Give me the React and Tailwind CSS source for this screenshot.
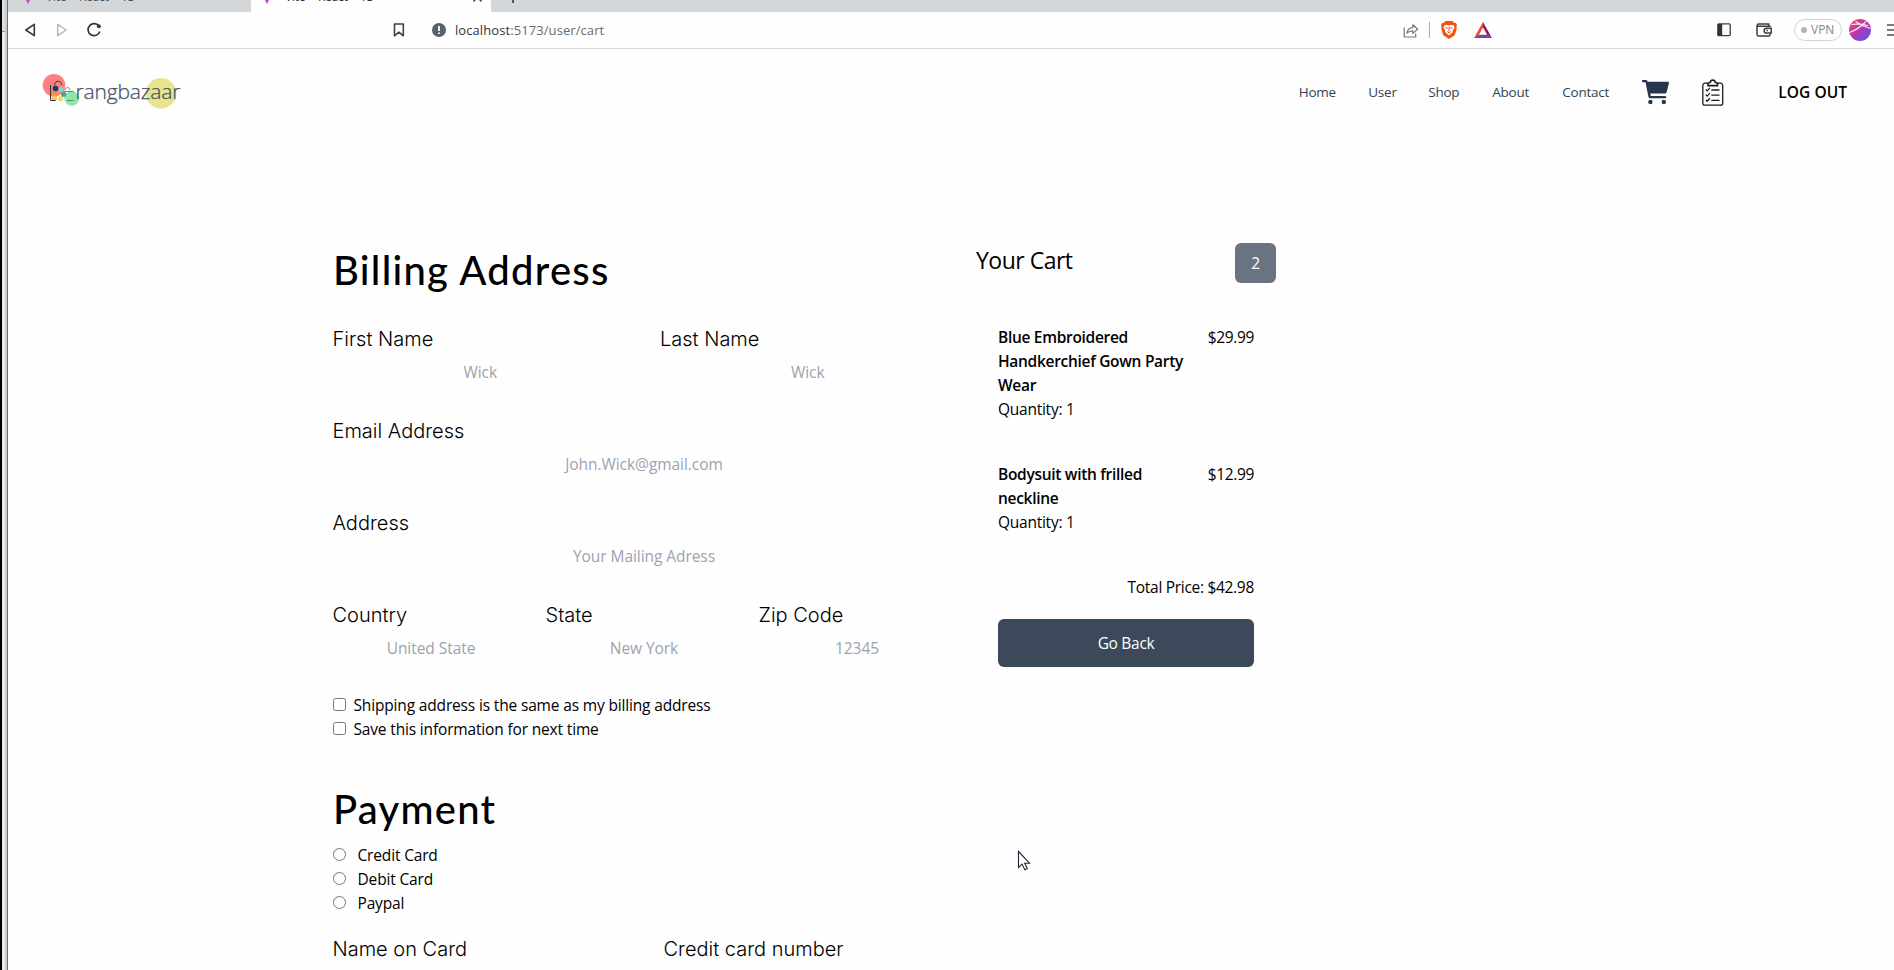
const TabLogo = () => (
  <svg className="h-3 w-3 shrink-0" viewBox="0 0 12 12">
    <path d="M0 0H12L6 12Z" fill="#b33df5" />
    <path d="M5 4h2.4L6.2 9.4Z" fill="#f5a623" />
  </svg>
);

function TabStrip() {
  return (
    <div className="flex h-3 w-full shrink-0 overflow-hidden bg-[#d3d7da] text-[12px] leading-3 tracking-[-0.2px]">
      <div className="-mt-2 flex h-5 w-[243px] shrink-0 pl-[14px]">
        <TabLogo />
        <span className="-mt-px ml-3 w-[91px] whitespace-nowrap text-[#4b4f54]">Vite + React + TS</span>
      </div>
      <div className="-mt-2 flex h-5 w-[240px] shrink-0 bg-[#fefefe] pl-[10px]">
        <TabLogo />
        <span className="-mt-px ml-3 whitespace-nowrap text-[#2b2e33]">Vite + React + TS</span>
        <svg className="mr-[9px] ml-auto h-[10px] w-[9px]" viewBox="0 0 9 10" stroke="#33373c" strokeWidth="1.4">
          <path d="M0.5 1 8.5 9.5M8.5 1 .5 9.5" />
        </svg>
      </div>
      <svg className="-mt-2 ml-4 h-3 w-3" viewBox="0 0 12 12" stroke="#33373c" strokeWidth="1.6">
        <path d="M6 0v11M.5 5.500h11" />
      </svg>
    </div>
  );
}

function AddressBar() {
  return (
    <div className="flex h-[37px] w-full shrink-0 items-center overflow-hidden border-b border-[#d0d5d9] bg-[#fefefe]">
      <svg className="ml-[16px] h-4 w-3 shrink-0" viewBox="0 0 12 16" fill="none" stroke="#34383d" strokeWidth="1.6" strokeLinejoin="round">
        <path d="M10.300 2.300v11.400L1.800 8Z" />
      </svg>
      <svg className="ml-[20px] h-4 w-3 shrink-0" viewBox="0 0 12 16" fill="none" stroke="#b3b6b9" strokeWidth="1.500" strokeLinejoin="round">
        <path d="M1.700 2.300v11.400L10.200 8Z" />
      </svg>
      <svg className="ml-[18px] h-4 w-4 shrink-0" viewBox="0 0 16 16" fill="none" stroke="#34383d" strokeWidth="1.700">
        <path d="M13 4.200A6 6 0 1 0 13.800 9.500" />
        <circle cx="12.800" cy="4.200" r="2" fill="#34383d" stroke="none" />
      </svg>
      <svg className="ml-[291px] h-4 w-3 shrink-0" viewBox="0 0 12 16" fill="none" stroke="#3f4347" strokeWidth="1.600">
        <path d="M1.500 2h8.800v11.800L5.900 10.200 1.500 13.800Z" strokeLinejoin="round" />
      </svg>
      <svg className="ml-[27px] h-[14px] w-[14px] shrink-0" viewBox="0 0 14 14">
        <circle cx="7" cy="7" r="7" fill="#59616b" />
        <path d="M7 3v5M7 9.400v1.700" stroke="#fff" strokeWidth="1.800" />
      </svg>
      <div className="ml-[9px] w-[160px] shrink-0 text-[13px] tracking-[0.08px] whitespace-nowrap text-[#676c72]">
        <span className="text-[#33373c]">localhost</span>:5173/user/cart
      </div>
      <svg className="ml-[788px] h-[15px] w-4 shrink-0" viewBox="0 0 16 15" fill="none" stroke="#72767a" strokeWidth="1.200">
        <path d="M1.200 4.500v9.500h11.500v-3.500" />
        <path d="M4 10.200c.4-3.400 2.300-5.400 5.800-5.500V1.800l4.900 4.400-4.900 4.200V7.800C7.200 7.700 5.500 8.500 4 10.200Z" strokeLinejoin="round" />
      </svg>
      <div className="ml-[10px] h-4 w-px shrink-0 bg-[#a9acaf]" />
      <svg className="ml-[11px] h-[18px] w-4 shrink-0" viewBox="0 0 16 18">
        <path d="M4.500 0h7L13 1.700l1.800.2L16 4l-.6 2 .3 2-2 6.300L8 18l-5.700-3.700L.3 8l.3-2L0 4l1.200-2.100 1.800-.2Z" fill="#f8500f" />
        <path d="M3.200 4.500 6 3.800l2 .6 2-.6 2.800.7.800 2.500-2 2.500.3 1.500L8 14.500 4.100 11l.3-1.500-2-2.500Z" fill="#fff" />
        <path d="m4.500 6.700 2.300.6M11.500 6.700l-2.300.6M8 6v4.500M6.300 10.500 8 11.800l1.700-1.300" stroke="#f8500f" strokeWidth="1" fill="none" />
      </svg>
      <svg className="ml-[17px] h-4 w-[18px] shrink-0" viewBox="0 0 18 16">
        <path d="M9 0 0 16 4.800 13 9 5.200Z" fill="#f9492a" />
        <path d="M9 0 18 16 13.200 13 9 5.200Z" fill="#951e63" />
        <path d="M0 16H18L13.200 12.800H4.800Z" fill="#6f45a5" />
      </svg>
      <svg className="ml-[225px] h-[14px] w-[14px] shrink-0" viewBox="0 0 14 14">
        <rect x=".8" y=".8" width="12.400" height="11.900" rx="1" fill="none" stroke="#3a3e43" strokeWidth="1.300" />
        <path d="M1 1h4.200v11.500H1Z" fill="#2f3338" />
      </svg>
      <svg className="ml-[25px] h-[14px] w-4 shrink-0" viewBox="0 0 16 14" fill="none" stroke="#3a3e43" strokeWidth="1.500">
        <path d="M14 4V3.300H2.200A1.200 1.200 0 0 1 2.200 1H12.700V3M1 2.200v9.300a1.400 1.400 0 0 0 1.400 1.400H13a1 1 0 0 0 1-1V10.500" />
        <path d="M15.200 5.300H10.500a2.300 2.300 0 0 0 0 4.700h4.700Z" />
        <path d="M10.500 7.600h1.500" />
      </svg>
      <div className="ml-[22px] flex h-[22px] w-12 shrink-0 items-center rounded-full border border-[#cfd4da] pl-[6px] text-[12px] text-[#84888f]">
        <span className="mr-1 h-[6px] w-[6px] rounded-full bg-[#b1b1c6]" />
        VPN
      </div>
      <svg className="ml-[7px] h-[22px] w-[22px] shrink-0" viewBox="0 0 22 22">
        <defs>
          <linearGradient id="globe" x1="0" y1="0" x2="1" y2="1">
            <stop offset="0.100" stopColor="#f2476a" />
            <stop offset="0.500" stopColor="#b733b5" />
            <stop offset="0.900" stopColor="#5c55e0" />
          </linearGradient>
        </defs>
        <circle cx="11" cy="11" r="11" fill="url(#globe)" />
        <path d="M2.500 5.500Q11 4.500 19 6.500M.5 13.500Q10 10 17 2.500M6.500 2.500Q13 7 21.500 9.500" fill="none" stroke="#fbeaf6" strokeWidth="1.100" />
      </svg>
      <svg className="ml-[16px] h-3 w-[14px] shrink-0" viewBox="0 0 14 12" stroke="#4b4f54" strokeWidth="1.500">
        <path d="M0 1h14M0 6h14M0 11h14" />
      </svg>
    </div>
  );
}

const Logo = () => (
  <svg className="h-[60px] w-[170px]" viewBox="30 60 170 60">
    <circle cx="54" cy="85.300" r="11.300" fill="#ff8080" />
    <circle cx="161" cy="93.300" r="15.300" fill="#e8e48c" />
    <circle cx="71.700" cy="98.500" r="7.300" fill="#8ae8a8" />
    <rect x="52" y="91" width="5" height="6" fill="#f58b4c" />
    <circle cx="54.300" cy="98.300" r="2.700" fill="#fcc763" />
    <circle cx="60.400" cy="98.800" r="2.700" fill="#f5d580" />
    <path d="M50.600 85v15.500h5M54.500 85.500c0-5.500 7-5.500 7.200-.5" fill="none" stroke="#2d2b35" strokeWidth="1" />
    <path d="M63.500 91.500h10M65 90.500c.5-4 4.500-4 5 0M67 100.500h6.500" fill="none" stroke="#4e6a62" strokeWidth=".8" />
    <circle cx="55.600" cy="88.500" r="2.800" fill="#143c66" />
    <circle cx="61" cy="89.500" r="2.400" fill="#7ddcc0" />
    <circle cx="63.600" cy="94.300" r="2.600" fill="#46a58d" />
    <text x="75.500" y="98.600" textLength="105" lengthAdjust="spacing" className="fill-[#46506a] stroke-[#46506a] stroke-[0.25] font-['Open_Sans'] text-[21px] font-light">
      rangbazaar
    </text>
  </svg>
);

const CartIcon = () => (
  <svg className="h-[25px] w-[27px]" viewBox="0 0 27 25" fill="#26374d">
    <path d="M0 .8C0 .3.300 0 .8 0H4c.7 0 1.200.4 1.400 1.100L5.500 1.700H25.800c.8 0 1.300.7 1.100 1.500L24.700 12a2 2 0 0 1-2 1.500H8.300l.5 2.600H23c.7 0 1.200.5 1.200 1.100s-.5 1.100-1.200 1.100H8.100c-.8 0-1.400-.5-1.600-1.300L3.500 2.200H.8C.3 2.200 0 1.800 0 1.300Z" />
    <circle cx="8.400" cy="22" r="2.200" />
    <circle cx="21.800" cy="22" r="2.200" />
  </svg>
);

const OrdersIcon = () => (
  <svg className="h-[27px] w-[22px]" viewBox="0 0 22 27" fill="none" stroke="#1c1c1c" strokeWidth="1.300">
    <path d="M6 4.200H3A2.200 2.200 0 0 0 .8 6.400V24A2.200 2.200 0 0 0 3 26.200H18.500A2.200 2.200 0 0 0 20.700 24V6.400A2.200 2.200 0 0 0 18.500 4.200H15.500" />
    <path d="M6 6.600V4.200L8.300 3.300C8.600 .4 12.900.4 13.200 3.300L15.500 4.200V6.600Z" strokeWidth="1.600" />
    <path d="M3.800 10.500l1.400 1.400 2.700-3M3.800 15.700l1.400 1.400 2.700-3M3.800 20.900l1.400 1.400 2.700-3M9.300 11h8.200M9.300 16.200h8.200M9.300 21.400h8.200" />
  </svg>
);

function SiteNav() {
  return (
    <header className="flex h-[86px] shrink-0 items-center pr-[47px] pl-[22px]">
      <div className="mt-[-4px]">
        <Logo />
      </div>
      <nav className="ml-auto flex items-center text-[13.500px] tracking-[-0.250px] text-[#374151]">
        <a className="w-[69.500px]">Home</a>
        <a className="w-[60px]">User</a>
        <a className="w-[64px]">Shop</a>
        <a className="w-[70px]">About</a>
        <a className="w-[80px]">Contact</a>
        <CartIcon />
        <div className="ml-[33px]">
          <OrdersIcon />
        </div>
        <a className="ml-[54px] text-[15.500px] font-semibold tracking-[0.050px] text-black">LOG OUT</a>
      </nav>
    </header>
  );
}

function Field({ label, placeholder }) {
  return (
    <div className="min-w-0">
      <label className="block pl-[0.500px] font-['Inter'] text-[20px] leading-7 font-light text-black">{label}</label>
      {placeholder && (
        <input
          placeholder={placeholder}
          className="mt-[7px] block h-6 w-full text-center text-[15.500px] leading-6 tracking-[-0.060px] outline-none placeholder:text-[#9ca3af]"
        />
      )}
    </div>
  );
}

const Heading = ({ children }) => (
  <h2 className="pt-[2px] pl-px font-['Lato'] text-[40px] leading-[46px] font-medium tracking-[1.250px]">{children}</h2>
);

function BillingForm() {
  return (
    <form className="w-[624px] shrink-0">
      <div className="pt-px pb-8">
        <Heading>Billing Address</Heading>
      </div>
      <div className="grid grid-cols-2 gap-x-[31px]">
        <Field label="First Name" placeholder="Wick" />
        <Field label="Last Name" placeholder="Wick" />
      </div>
      <div className="mt-[33px]">
        <Field label="Email Address" placeholder="John.Wick@gmail.com" />
      </div>
      <div className="mt-[33px]">
        <Field label="Address" placeholder="Your Mailing Adress" />
      </div>
      <div className="mt-[33px] grid grid-cols-3 gap-x-[15px]">
        <Field label="Country" placeholder="United State" />
        <Field label="State" placeholder="New York" />
        <Field label="Zip Code" placeholder="12345" />
      </div>
      <div className="mt-[33px]">
        {["Shipping address is the same as my billing address", "Save this information for next time"].map((t) => (
          <label key={t} className="flex h-6 items-center pl-px tracking-[-0.160px]">
            <span className="mt-[-1px] mr-[7.500px] h-[13px] w-[13px] rounded-[2.500px] border border-[#767676] bg-white" />
            {t}
          </label>
        ))}
      </div>
      <div className="mt-[43px] mb-[11px]">
        <Heading>Payment</Heading>
      </div>
      {["Credit Card", "Debit Card", "Paypal"].map((t) => (
        <label key={t} className="flex h-6 items-center pl-px tracking-[-0.160px]">
          <span className="mt-[-1px] mr-[11.500px] h-[13px] w-[13px] rounded-full border border-[#767676] bg-white" />
          {t}
        </label>
      ))}
      <div className="mt-5 grid grid-cols-[300px_1fr] gap-x-[31px]">
        <Field label="Name on Card" />
        <Field label="Credit card number" />
      </div>
    </form>
  );
}

const items = [
  { name: "Blue Embroidered Handkerchief Gown Party Wear", price: "$29.99", qty: 1 },
  { name: "Bodysuit with frilled neckline", price: "$12.99", qty: 1 },
];

function CartSummary() {
  return (
    <section className="ml-[20px] w-[300px] shrink-0 tracking-[-0.250px]">
      <div className="mt-[-1px] flex justify-between">
        <h3 className="pt-px text-[23px] leading-8 tracking-[-0.500px]">Your Cart</h3>
        <span className="flex h-10 w-[41px] items-center justify-center rounded-md bg-[#6b7280] text-white">2</span>
      </div>
      <div className="mt-[42px] mr-[22px] ml-[22px] flex flex-col">
        {items.map((i) => (
          <div key={i.name} className="mb-[41px] flex justify-between">
            <div className="w-[195px]">
              <div className="font-semibold tracking-[-0.300px]">{i.name}</div>
              <div>Quantity: {i.qty}</div>
            </div>
            <div className="tracking-[-0.350px]">{i.price}</div>
          </div>
        ))}
        <div className="text-right tracking-[-0.300px]">Total Price: $42.98</div>
        <button className="mt-5 h-12 rounded-md bg-[#3b495b] font-medium tracking-[-0.300px] text-white">Go Back</button>
      </div>
    </section>
  );
}

export default function App() {
  return (
    <div className="relative flex h-[970px] w-[1894px] overflow-hidden bg-[#fefefe] font-['Open_Sans',sans-serif] text-[15.500px] leading-6 text-black">
      <div className="flex shrink-0">
        <div className="w-[2px] bg-black" />
        <div className="flex w-[3px] flex-col bg-[#e9eaec]">
          <div className="h-8 border-b border-[#8d9093] bg-[#dcdee0]" />
        </div>
        <div className="w-[2px] bg-[#c9cdd0]" />
        <div className="w-px bg-[#6d7073]" />
      </div>
      <div className="flex min-w-0 flex-1 flex-col">
        <TabStrip />
        <AddressBar />
        <SiteNav />
        <main className="mt-[109px] flex items-start pl-[324px]">
          <BillingForm />
          <CartSummary />
        </main>
      </div>
      <svg className="absolute top-[850px] left-[1017px] h-[22px] w-[14px]" viewBox="0 0 14 22">
        <path d="M1.500 1.500v16l3.600-3.400 2.700 5.600 2.500-1.200-2.600-5.300h4.800Z" fill="#fff" stroke="#23233a" strokeWidth="1.100" />
      </svg>
    </div>
  );
}
